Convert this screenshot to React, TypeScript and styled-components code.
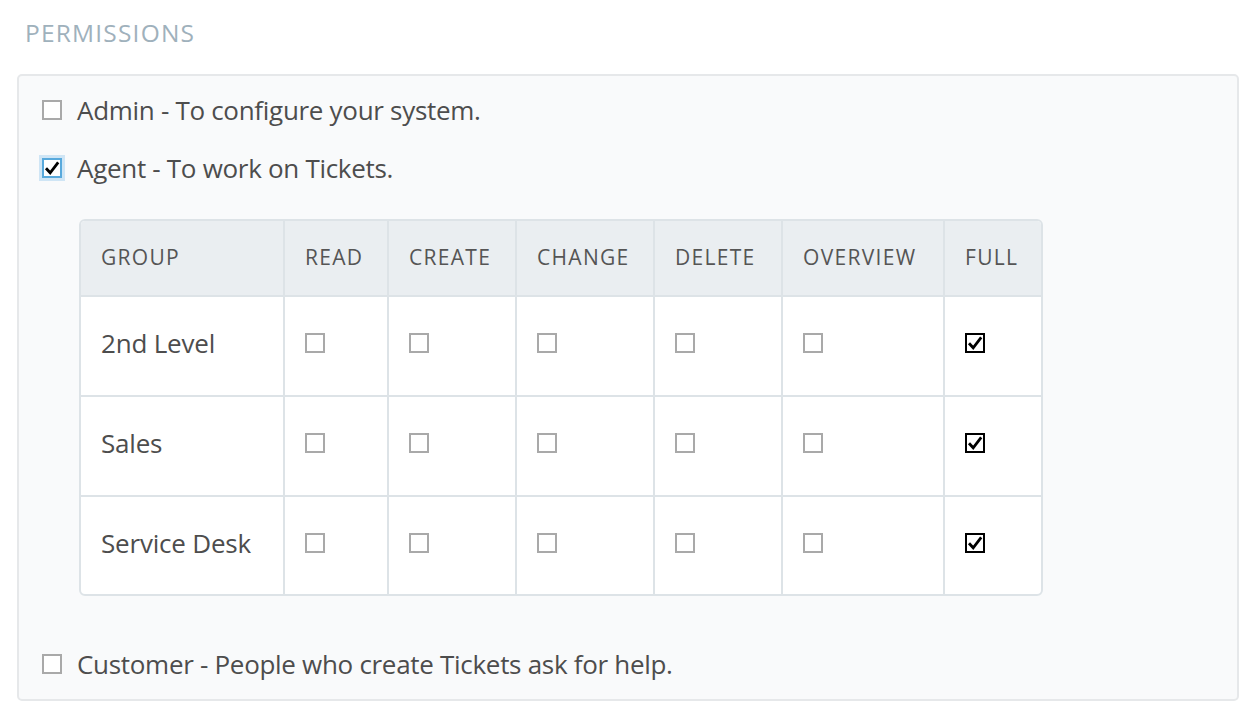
import styled, { createGlobalStyle } from "styled-components";

const GlobalStyle = createGlobalStyle`
    * {
        box-sizing: border-box;
    }
    body {
        margin: 0;
        background: #ffffff;
        font-family: "Open Sans", "Noto Sans", sans-serif;
        color: #4d4d4d;
    }
`

type Group = {
    name: string,
    read: boolean,
    create: boolean,
    change: boolean,
    delete: boolean,
    overview: boolean,
    full: boolean,
}

const columns = ["Group", "Read", "Create", "Change", "Delete", "Overview", "Full"]

const groups: Group[] = [
    {name: "2nd Level", read: false, create: false, change: false, delete: false, overview: false, full: true},
    {name: "Sales", read: false, create: false, change: false, delete: false, overview: false, full: true},
    {name: "Service Desk", read: false, create: false, change: false, delete: false, overview: false, full: true},
]

type BoxProps = {
    checked?: boolean,
    focused?: boolean,
}

const CheckBox = ({checked, focused}: BoxProps) => {
    return <StyledBox $checked={!!checked} $focused={!!focused}>
        {checked && <svg width="16" height="16" viewBox="0 0 16 16">
            <path d="M2 8.2 L6.2 12.8 L14.2 2.4" fill="none" stroke="#000" strokeWidth="2.8"
                  strokeLinejoin="miter" strokeLinecap="butt"/>
        </svg>}
    </StyledBox>
}

const App = () => {
    return <>
        <GlobalStyle/>
        <StyledPage>
            <StyledHeading>Permissions</StyledHeading>
            <StyledPanel>
                <StyledOption>
                    <CheckBox/>
                    <StyledLabel>Admin - To configure your system.</StyledLabel>
                </StyledOption>
                <StyledOption>
                    <CheckBox checked focused/>
                    <StyledLabel>Agent - To work on Tickets.</StyledLabel>
                </StyledOption>
                <StyledTable>
                    {columns.map((c, i) =>
                        <StyledHeadCell key={c} $first={i === 0}>{c}</StyledHeadCell>
                    )}
                    {groups.map(g => <>
                        <StyledCell key={g.name + "-name"} $first>{g.name}</StyledCell>
                        <StyledCell><CheckBox checked={g.read}/></StyledCell>
                        <StyledCell><CheckBox checked={g.create}/></StyledCell>
                        <StyledCell><CheckBox checked={g.change}/></StyledCell>
                        <StyledCell><CheckBox checked={g.delete}/></StyledCell>
                        <StyledCell><CheckBox checked={g.overview}/></StyledCell>
                        <StyledCell><CheckBox checked={g.full}/></StyledCell>
                    </>)}
                </StyledTable>
                <StyledOption $spaced>
                    <CheckBox/>
                    <StyledLabel>Customer - People who create Tickets ask for help.</StyledLabel>
                </StyledOption>
            </StyledPanel>
        </StyledPage>
    </>
}

const StyledPage = styled.div`
    width: 1254px;
    height: 718px;
    padding: 17px 15px 0 17px;
`

const StyledHeading = styled.h2`
    margin: 0 0 0 8px;
    height: 57px;
    font-size: 24.5px;
    font-weight: 400;
    letter-spacing: 1.2px;
    text-transform: uppercase;
    color: #9fb1bc;
    line-height: 32px;
`

const StyledPanel = styled.div`
    height: 627px;
    background: #f9fafb;
    border: 2px solid #e6e8ea;
    border-radius: 5px;
    padding: 14px 23px 14px 23px;
    display: flex;
    flex-direction: column;
`

const StyledOption = styled.div<{ $spaced?: boolean }>`
    display: flex;
    align-items: center;
    flex: none;
    gap: 15px;
    height: 40px;
    margin-bottom: 18px;
    ${props => props.$spaced ? "margin-top: 48px;" : ""}
`

const StyledLabel = styled.span`
    font-size: 26px;
    letter-spacing: -0.3px;
    color: #4d4d4d;
`

const StyledBox = styled.span<{ $checked: boolean, $focused: boolean }>`
    width: 20px;
    height: 20px;
    flex: none;
    display: inline-flex;
    align-items: center;
    justify-content: center;
    background: #ffffff;
    border: 2px solid ${props => props.$focused ? "#58a9dc" : props.$checked ? "#000000" : "#a9a9a9"};
    box-shadow: ${props => props.$focused ? "0 0 0 3px #cfe5f5" : "none"};
`

const StyledTable = styled.div`
    flex: none;
    margin: 13px 0 0 37px;
    width: 964px;
    display: grid;
    grid-template-columns: 202px 104px 128px 138px 128px 162px 98px;
    grid-template-rows: 74px 100px 100px 99px;
    border: 2px solid #dde3e7;
    border-radius: 6px;
    overflow: hidden;
    background: #ffffff;
`

const StyledHeadCell = styled.div<{ $first?: boolean }>`
    display: flex;
    align-items: center;
    padding: 0 0 2px 20px;
    background: #eaeef1;
    border-left: ${props => props.$first ? "none" : "2px solid #dde3e7"};
    font-size: 21px;
    letter-spacing: 1.3px;
    text-transform: uppercase;
    color: #555555;
`

const StyledCell = styled.div<{ $first?: boolean }>`
    display: flex;
    align-items: center;
    padding: 0 0 6px 20px;
    border-top: 2px solid #dde3e7;
    border-left: ${props => props.$first ? "none" : "2px solid #dde3e7"};
    font-size: 26px;
    letter-spacing: -0.2px;
    color: #4d4d4d;
`

export default App
